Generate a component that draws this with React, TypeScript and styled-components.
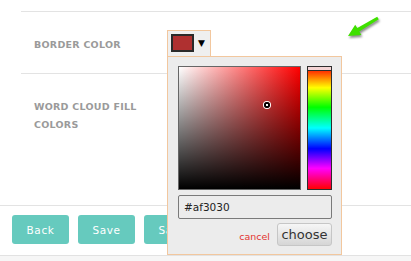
import React from "react";
import styled, { createGlobalStyle } from "styled-components";

const Global = createGlobalStyle`
  html, body { margin: 0; padding: 0; background: #ffffff; }
  body { font-family: "DejaVu Sans", Verdana, sans-serif; width: 411px; height: 261px; overflow: hidden; }
  * { box-sizing: border-box; }
`;

const Page = styled.div`
  position: relative;
  width: 411px;
  height: 261px;
  background: #f6f6f6;
`;

const Sheet = styled.div`
  background: #ffffff;
  border-bottom: 1px solid #e2e2e2;
`;

const Form = styled.div`
  padding: 11px 0 0 21px;
`;

const Row = styled.div<{ $height: number; $padTop: number; $last?: boolean }>`
  display: flex;
  align-items: flex-start;
  height: ${(p) => p.$height}px;
  padding: ${(p) => p.$padTop}px 0 0 13px;
  border-top: 1px solid #e3e3e3;
  border-bottom: ${(p) => (p.$last ? "none" : "1px solid #e3e3e3")};
  margin-top: ${(p) => (p.$last ? -1 : 0)}px;
  position: relative;
`;

const Label = styled.div`
  width: 133px;
  padding-right: 14px;
  font-weight: bold;
  font-size: 9.5px;
  line-height: 18px;
  letter-spacing: 0.25px;
  text-transform: uppercase;
  color: #9a9a9a;
`;

const Control = styled.div`
  position: relative;
  margin-top: -6px;
`;

const Toggle = styled.div`
  display: flex;
  align-items: flex-start;
  gap: 4px;
  width: 44px;
  height: 26px;
  padding: 3px 0 0 3px;
  background: #efefef;
  border: 1px solid #f2c79e;
  border-bottom: none;
`;

const Swatch = styled.div<{ $color: string }>`
  width: 23px;
  height: 18px;
  background: ${(p) => p.$color};
  border: 2px solid #2a2a2a;
`;

const Caret = styled.span`
  font-size: 9px;
  line-height: 9px;
  margin-top: 5px;
  color: #000;
`;

const Popup = styled.div`
  position: absolute;
  left: 0;
  top: 26px;
  z-index: 10;
  width: 175px;
  height: 199px;
  background: #ececec;
  border: 1px solid #f2c79e;
  padding: 9px 9px 0 10px;
  display: flex;
  flex-direction: column;
`;

const Pickers = styled.div`
  display: flex;
  gap: 6px;
  height: 124px;
`;

const SatVal = styled.div<{ $hue: string }>`
  position: relative;
  width: 123px;
  height: 124px;
  border: 1px solid #666;
  background: linear-gradient(to top, #000, rgba(0, 0, 0, 0)),
    linear-gradient(to right, #fff, ${(p) => p.$hue});
`;

const Marker = styled.div`
  position: absolute;
  width: 6px;
  height: 6px;
  border-radius: 50%;
  background: radial-gradient(circle, #fff 0 0.8px, #000 1.2px);
  box-shadow: 0 0 0 1px #fff;
  transform: translate(-50%, -50%);
`;

const HueBar = styled.div`
  position: relative;
  width: 25px;
  height: 124px;
  border: 1px solid #2d2d2d;
  background: linear-gradient(
    to bottom,
    #ff0000 0%,
    #ffff00 17%,
    #00ff00 33%,
    #00ffff 50%,
    #0000ff 67%,
    #ff00ff 83%,
    #ff0000 100%
  );
`;

const HueHandle = styled.div`
  position: absolute;
  left: 0;
  right: 0;
  top: 0;
  height: 4px;
  background: #f4d4d4;
  border-bottom: 1px solid #2d2d2d;
`;

const HexInput = styled.div`
  margin-top: 5px;
  width: 154px;
  height: 24px;
  border: 1px solid #7a7a7a;
  border-radius: 2px;
  background: #ececec;
  padding-left: 5px;
  display: flex;
  align-items: center;
  font-size: 10.5px;
  color: #222;
`;

const Actions = styled.div`
  display: flex;
  justify-content: flex-end;
  align-items: center;
  gap: 7px;
  margin-top: 4px;
  width: 154px;
`;

const Cancel = styled.span`
  font-size: 9.5px;
  color: #e3342f;
  margin-top: 3px;
`;

const Choose = styled.div`
  width: 55px;
  height: 23px;
  border: 1px solid #c6c6c6;
  border-radius: 3px;
  background: linear-gradient(to bottom, #f6f6f6, #d6d6d6);
  display: flex;
  align-items: center;
  justify-content: center;
  font-size: 13px;
  color: #333;
`;

const Footer = styled.div`
  display: flex;
  gap: 9px;
  padding: 9px 12px 11px;
  border-top: 1px solid #e3e3e3;
`;

const Button = styled.div`
  width: 57px;
  height: 29px;
  border-radius: 3px;
  background: #66cabe;
  color: #fff;
  font-size: 10.5px;
  letter-spacing: 0.6px;
  display: flex;
  align-items: center;
  justify-content: center;
`;

const Pointer = styled.svg`
  position: absolute;
  left: 344px;
  top: 14px;
  filter: drop-shadow(1px 2px 1px rgba(0, 0, 0, 0.45));
`;

export default function App() {
  const color = "#af3030";
  return (
    <>
      <Global />
      <Page>
        <Sheet>
          <Form>
            <Row $height={63} $padTop={24}>
              <Label>Border Color</Label>
              <Control>
                <Toggle>
                  <Swatch $color={color} />
                  <Caret>▼</Caret>
                </Toggle>
                <Popup>
                  <Pickers>
                    <SatVal $hue="#ff0000">
                      <Marker style={{ left: 88, top: 38 }} />
                    </SatVal>
                    <HueBar>
                      <HueHandle />
                    </HueBar>
                  </Pickers>
                  <HexInput>{color}</HexInput>
                  <Actions>
                    <Cancel>cancel</Cancel>
                    <Choose>choose</Choose>
                  </Actions>
                </Popup>
              </Control>
            </Row>
            <Row $height={132} $padTop={24} $last>
              <Label>Word Cloud Fill Colors</Label>
            </Row>
          </Form>
          <Footer>
            <Button>Back</Button>
            <Button>Save</Button>
            <Button>Save</Button>
          </Footer>
        </Sheet>
        <Pointer width="40" height="28" viewBox="0 0 40 28">
          <polygon
            points="4,22 17.4,20.9 15.3,17.5 34.8,5.3 33.2,2.7 13.3,14.1 11.2,10.7"
            fill="#3fe000"
          />
        </Pointer>
      </Page>
    </>
  );
}
